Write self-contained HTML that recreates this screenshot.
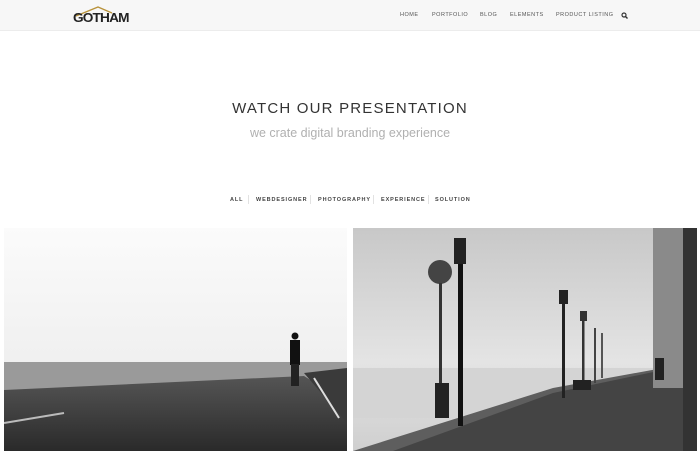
<!DOCTYPE html>
<html><head><meta charset="utf-8"><style>
body{margin:0;width:700px;height:451px;overflow:hidden;background:#fff;font-family:"Liberation Sans",sans-serif;position:relative}
.hdr{position:absolute;left:0;top:0;width:700px;height:30px;background:#f7f7f7;border-bottom:1px solid #ececec}
.logo{position:absolute;left:73px;top:10px;font-size:13px;font-weight:bold;letter-spacing:-0.8px;color:#222;transform:scaleX(1.05);transform-origin:left}
.nav{position:absolute;top:12px;font-size:5.5px;letter-spacing:0.5px;color:#555;white-space:nowrap}
h1{position:absolute;top:100px;left:0;width:700px;text-align:center;margin:0;font-weight:normal;font-size:15px;letter-spacing:1.2px;color:#333}
.sub{position:absolute;top:126px;left:0;width:700px;text-align:center;font-size:12.5px;color:#b0b0b0}
.flt{position:absolute;top:197px;font-size:5.5px;font-weight:bold;letter-spacing:0.9px;color:#444;white-space:nowrap}
.sep{position:absolute;top:195px;width:1px;height:9px;background:#e2e2e2}
</style></head><body>
<div class="hdr">
<svg style="position:absolute;left:72px;top:5px" width="60" height="12"><path d="M4 11 L26 2 L40 8" stroke="#b8923a" stroke-width="1.3" fill="none"/></svg>
<div class="logo">GOTHAM</div>
<span class="nav" style="left:400px">HOME</span>
<span class="nav" style="left:432px">PORTFOLIO</span>
<span class="nav" style="left:480px">BLOG</span>
<span class="nav" style="left:510px">ELEMENTS</span>
<span class="nav" style="left:556px">PRODUCT LISTING</span>
<svg style="position:absolute;left:621px;top:12px" width="7" height="7"><circle cx="3" cy="3" r="2" stroke="#333" stroke-width="1.2" fill="none"/><path d="M4.5 4.5L6.5 6.5" stroke="#333" stroke-width="1.4"/></svg>
</div>
<h1>WATCH OUR PRESENTATION</h1>
<div class="sub">we crate digital branding experience</div>
<span class="flt" style="left:230px">ALL</span><div class="sep" style="left:248px"></div>
<span class="flt" style="left:256px">WEBDESIGNER</span><div class="sep" style="left:310px"></div>
<span class="flt" style="left:318px">PHOTOGRAPHY</span><div class="sep" style="left:373px"></div>
<span class="flt" style="left:381px">EXPERIENCE</span><div class="sep" style="left:428px"></div>
<span class="flt" style="left:435px">SOLUTION</span>
<svg style="position:absolute;left:4px;top:228px" width="343" height="223">
<defs><linearGradient id="s" x1="0" y1="0" x2="0" y2="1"><stop offset="0" stop-color="#fbfbfb"/><stop offset="1" stop-color="#e8e8e8"/></linearGradient>
<linearGradient id="r" x1="0" y1="0" x2="0" y2="1"><stop offset="0" stop-color="#555"/><stop offset="1" stop-color="#2a2a2a"/></linearGradient></defs>
<rect width="343" height="223" fill="url(#s)"/>
<rect y="134" width="343" height="30" fill="#9a9a9a"/>
<path d="M0 162 L300 148 L343 175 L343 223 L0 223Z" fill="url(#r)"/>
<path d="M300 145 L343 140 L343 195 Z" fill="#3a3a3a"/>
<path d="M0 195 L60 185" stroke="#bbb" stroke-width="2"/>
<path d="M310 150 L335 190" stroke="#ddd" stroke-width="2"/>
<rect x="286" y="112" width="10" height="25" fill="#111"/><circle cx="291" cy="108" r="3.5" fill="#111"/><rect x="287" y="136" width="8" height="22" fill="#222"/>
</svg>
<svg style="position:absolute;left:353px;top:228px" width="344" height="223">
<defs><linearGradient id="f" x1="0" y1="0" x2="0" y2="1"><stop offset="0" stop-color="#c8c8c8"/><stop offset="0.6" stop-color="#e4e4e4"/><stop offset="1" stop-color="#cfcfcf"/></linearGradient></defs>
<rect width="344" height="223" fill="url(#f)"/>
<rect y="140" width="344" height="50" fill="#d4d4d4"/>
<path d="M0 223 L200 160 L310 140 L344 150 L344 223Z" fill="#5e5e5e"/>
<path d="M40 223 L200 165 L310 142 L344 170 L344 223Z" fill="#444"/>
<rect x="300" y="0" width="44" height="160" fill="#8a8a8a"/><rect x="330" y="0" width="14" height="223" fill="#333"/>
<rect x="105" y="20" width="5" height="178" fill="#111"/><rect x="101" y="10" width="12" height="26" fill="#222"/>
<circle cx="87" cy="44" r="12" fill="#444"/><rect x="86" y="55" width="3" height="100" fill="#333"/><rect x="82" y="155" width="14" height="35" fill="#222"/>
<rect x="209" y="70" width="3" height="100" fill="#222"/><rect x="206" y="62" width="9" height="14" fill="#222"/>
<rect x="229" y="90" width="2.5" height="70" fill="#333"/><rect x="227" y="83" width="7" height="10" fill="#333"/>
<rect x="241" y="100" width="2" height="55" fill="#444"/><rect x="248" y="105" width="2" height="45" fill="#555"/>
<rect x="220" y="152" width="18" height="10" fill="#222"/><rect x="302" y="130" width="9" height="22" fill="#222"/>
</svg>
</body></html>
